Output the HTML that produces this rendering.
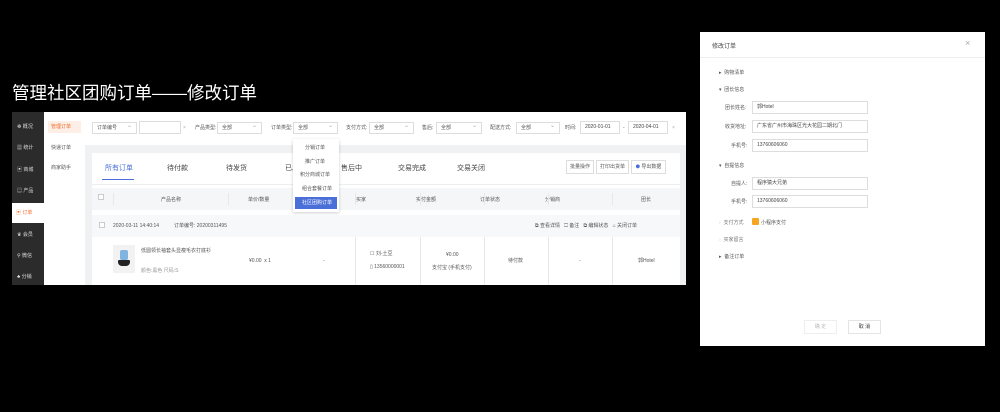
<!DOCTYPE html><html><head><meta charset="utf-8"><style>
*{margin:0;padding:0;box-sizing:border-box}
body{width:1000px;height:412px;background:#000;position:relative;overflow:hidden;font-family:"Liberation Sans","Noto Sans CJK SC",sans-serif;color:#555}
.a{position:absolute;white-space:nowrap}
.t{font-size:5px;line-height:6px}
.sel{position:absolute;height:12px;border:1px solid #ddd;background:#fff;font-size:5px;line-height:10px;padding-left:4px;color:#555}
.sel:after{content:"⌄";position:absolute;right:4px;top:-2px;color:#aaa;font-size:6px}
.inp{position:absolute;height:13px;border:1px solid #ddd;background:#fff;font-size:5px;line-height:11px;padding-left:4px;color:#444}
.vl{position:absolute;width:1px;background:#e8e8e8}
.btn{position:absolute;height:14px;border:1px solid #ddd;background:#fff;font-size:5px;line-height:12px;text-align:center;color:#555}
</style></head><body>
<div class="a" style="left:12px;top:82px;font-size:17.5px;color:#fff;line-height:22px">管理社区团购订单——修改订单</div>

<div class="a" style="left:12px;top:112px;width:674px;height:173px;background:#f0f1f3"></div>
<div class="a" style="left:12px;top:112px;width:32px;height:173px;background:#2b2b2b"></div>
<div class="a" style="left:12px;top:203px;width:32px;height:20px;background:#fff"></div>
<div class="a t" style="left:17px;top:124px;color:#ddd">☸ 概况</div>
<div class="a t" style="left:17px;top:145px;color:#ddd">▦ 统计</div>
<div class="a t" style="left:17px;top:167px;color:#ddd">▣ 商城</div>
<div class="a t" style="left:17px;top:188px;color:#ddd">▤ 产品</div>
<div class="a t" style="left:16px;top:210px;color:#f06a2a">▣ 订单</div>
<div class="a t" style="left:17px;top:232px;color:#ddd">♛ 会员</div>
<div class="a t" style="left:17px;top:253px;color:#ddd">⚲ 微信</div>
<div class="a t" style="left:17px;top:274px;color:#ddd">♣ 分销</div>
<div class="a" style="left:44px;top:112px;width:41px;height:173px;background:#fff"></div>
<div class="a" style="left:48px;top:121px;width:33px;height:12px;background:#fdeee6"></div>
<div class="a t" style="left:51px;top:124px;color:#f06a2a">管理订单</div>
<div class="a t" style="left:51px;top:145px">快递订单</div>
<div class="a t" style="left:51px;top:165px">商家助手</div>

<div class="a" style="left:85px;top:112px;width:601px;height:33px;background:#fff"></div>
<div class="sel" style="left:92px;top:122px;width:45px">订单编号</div>
<div class="inp" style="left:139px;top:121px;width:42px"></div>
<div class="a t" style="left:183px;top:125px;color:#aaa">×</div>
<div class="a t" style="left:195px;top:125px">产品类型:</div>
<div class="sel" style="left:217px;top:122px;width:45px">全部</div>
<div class="a t" style="left:271px;top:125px">订单类型:</div>
<div class="sel" style="left:293px;top:122px;width:45px">全部</div>
<div class="a t" style="left:346px;top:125px">支付方式:</div>
<div class="sel" style="left:369px;top:122px;width:45px">全部</div>
<div class="a t" style="left:422px;top:125px">售后:</div>
<div class="sel" style="left:436px;top:122px;width:46px">全部</div>
<div class="a t" style="left:490px;top:125px">配送方式:</div>
<div class="sel" style="left:516px;top:122px;width:44px">全部</div>
<div class="a t" style="left:565px;top:125px">时间:</div>
<div class="inp" style="left:580px;top:121px;width:40px">2020-01-01</div>
<div class="a t" style="left:623px;top:125px">-</div>
<div class="inp" style="left:628px;top:121px;width:40px">2020-04-01</div>
<div class="a t" style="left:672px;top:125px;color:#aaa">×</div>

<div class="a" style="left:92px;top:153px;width:588px;height:132px;background:#fff"></div>
<div class="a" style="left:105px;top:163px;font-size:7px;color:#4a6fd8">所有订单</div>
<div class="a" style="left:102px;top:179px;width:32px;height:1px;background:#4a6fd8"></div>
<div class="a" style="left:167px;top:163px;font-size:7px;color:#444">待付款</div>
<div class="a" style="left:226px;top:163px;font-size:7px;color:#444">待发货</div>
<div class="a" style="left:285px;top:163px;font-size:7px;color:#444">已发货</div>
<div class="a" style="left:341px;top:163px;font-size:7px;color:#444">售后中</div>
<div class="a" style="left:398px;top:163px;font-size:7px;color:#444">交易完成</div>
<div class="a" style="left:457px;top:163px;font-size:7px;color:#444">交易关闭</div>
<div class="btn" style="left:566px;top:160px;width:28px">批量操作</div>
<div class="btn" style="left:596px;top:160px;width:33px">打印出货单</div>
<div class="btn" style="left:631px;top:160px;width:35px"><span style="color:#4a6fd8">⬢</span> 导出数据</div>
<div class="a" style="left:92px;top:184px;width:588px;height:1px;background:#eee"></div>
<div class="a" style="left:92px;top:188px;width:588px;height:22px;background:#f5f6f8"></div>
<div class="a" style="left:98px;top:194px;width:6px;height:6px;border:1px solid #ccc;background:#fff"></div>
<div class="a t" style="left:161px;top:197px">产品名称</div>
<div class="a t" style="left:248px;top:197px">单价/数量</div>
<div class="a t" style="left:356px;top:197px">买家</div>
<div class="a t" style="left:416px;top:197px">实付金额</div>
<div class="a t" style="left:480px;top:197px">订单状态</div>
<div class="a t" style="left:545px;top:197px">分销商</div>
<div class="a t" style="left:641px;top:197px">团长</div>
<div class="vl" style="left:113px;top:193px;height:12px"></div>
<div class="vl" style="left:228px;top:193px;height:12px"></div>
<div class="vl" style="left:355px;top:193px;height:12px"></div>
<div class="vl" style="left:420px;top:193px;height:12px"></div>
<div class="vl" style="left:484px;top:193px;height:12px"></div>
<div class="vl" style="left:548px;top:193px;height:12px"></div>
<div class="vl" style="left:612px;top:193px;height:12px"></div>
<div class="a" style="left:293px;top:139px;width:46px;height:73px;background:#fff;box-shadow:0 1px 3px rgba(0,0,0,.2)"></div>
<div class="a t" style="left:305px;top:145px">分销订单</div>
<div class="a t" style="left:305px;top:159px">推广订单</div>
<div class="a t" style="left:300px;top:172px">积分商城订单</div>
<div class="a t" style="left:302px;top:186px">组合套餐订单</div>
<div class="a" style="left:295px;top:197px;width:42px;height:12px;background:#4a6fd8"></div>
<div class="a t" style="left:302px;top:200px;color:#fff">社区团购订单</div>

<div class="a" style="left:92px;top:215px;width:588px;height:22px;background:#f7f8fa"></div>
<div class="a" style="left:99px;top:222px;width:6px;height:6px;border:1px solid #ccc;background:#fff"></div>
<div class="a t" style="left:113px;top:223px">2020-03-11 14:40:14</div>
<div class="a t" style="left:174px;top:223px">订单编号: 20200311495</div>
<div class="a t" style="left:535px;top:223px">⧉ 查看详情 &nbsp; ☐ 备注 &nbsp; ⧉ 编辑状态 &nbsp; ⌂ 关闭订单</div>
<div class="vl" style="left:355px;top:237px;height:48px"></div>
<div class="vl" style="left:420px;top:237px;height:48px"></div>
<div class="vl" style="left:484px;top:237px;height:48px"></div>
<div class="vl" style="left:548px;top:237px;height:48px"></div>
<div class="vl" style="left:612px;top:237px;height:48px"></div>
<div class="a" style="left:113px;top:245px;width:22px;height:28px;background:#f2f2f2"></div>
<div class="a" style="left:120px;top:250px;width:8px;height:10px;background:#7fb4e0;border-radius:2px"></div>
<div class="a" style="left:118px;top:260px;width:12px;height:6px;background:#222;border-radius:1px 1px 4px 4px"></div>
<div class="a t" style="left:141px;top:248px">低圆领长袖套头显瘦毛衣打底衫</div>
<div class="a t" style="left:141px;top:268px;color:#999">颜色:黑色 尺码:S</div>
<div class="a t" style="left:249px;top:258px">¥0.00 &nbsp;x 1</div>
<div class="a t" style="left:323px;top:258px">-</div>
<div class="a t" style="left:370px;top:251px">☐ 刘-土豆</div>
<div class="a t" style="left:370px;top:264px">▯ 13560000001</div>
<div class="a t" style="left:446px;top:252px">¥0.00</div>
<div class="a t" style="left:432px;top:265px">支付宝 (手机支付)</div>
<div class="a t" style="left:508px;top:258px">待付款</div>
<div class="a t" style="left:579px;top:258px">-</div>
<div class="a t" style="left:638px;top:258px">郭Hotel</div>

<div class="a" style="left:700px;top:32px;width:285px;height:314px;background:#fff"></div>
<div class="a" style="left:712px;top:41px;font-size:6px;color:#444">修改订单</div>
<div class="a" style="left:965px;top:38px;font-size:9px;color:#aaa">×</div>
<div class="a" style="left:700px;top:57px;width:285px;height:1px;background:#eee"></div>
<div class="a t" style="left:719px;top:70px;color:#555">▸ &nbsp;购物清单</div>
<div class="a t" style="left:719px;top:87px;color:#555">▾ &nbsp;团长信息</div>
<div class="a t" style="left:725px;top:105px">团长姓名:</div>
<div class="inp" style="left:752px;top:101px;width:116px">郭Hotel</div>
<div class="a t" style="left:725px;top:124px">收货地址:</div>
<div class="inp" style="left:752px;top:120px;width:116px">广东省广州市海珠区光大花园二期北门</div>
<div class="a t" style="left:731px;top:143px">手机号:</div>
<div class="inp" style="left:752px;top:139px;width:116px">13760606060</div>
<div class="a t" style="left:719px;top:163px;color:#555">▾ &nbsp;自提信息</div>
<div class="a t" style="left:731px;top:181px">自提人:</div>
<div class="inp" style="left:752px;top:177px;width:116px">程序猿大兄弟</div>
<div class="a t" style="left:731px;top:199px">手机号:</div>
<div class="inp" style="left:752px;top:195px;width:116px">13760606060</div>
<div class="a t" style="left:719px;top:220px;color:#777"><span style="color:#ccc">›</span> &nbsp;支付方式</div>
<div class="a" style="left:752px;top:218px;width:7px;height:7px;background:#f5a623;border-radius:1px"></div>
<div class="a t" style="left:761px;top:220px">小程序支付</div>
<div class="a t" style="left:719px;top:237px;color:#777"><span style="color:#ccc">›</span> &nbsp;买家留言</div>
<div class="a t" style="left:719px;top:254px;color:#555">▸ &nbsp;备注订单</div>
<div class="btn" style="left:804px;top:320px;width:33px;color:#bbb;border-color:#eee">确 定</div>
<div class="btn" style="left:848px;top:320px;width:33px;color:#333;border-color:#e4e4e4">取 消</div>
</body></html>
